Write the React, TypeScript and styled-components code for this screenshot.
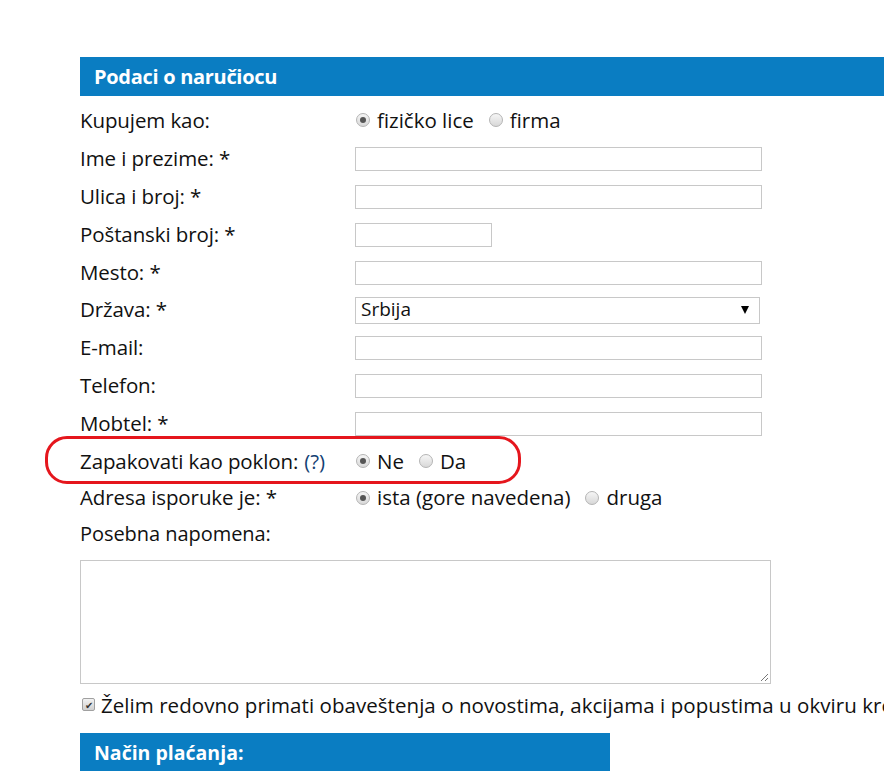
import styled, { createGlobalStyle } from 'styled-components';

const GlobalStyle = createGlobalStyle`
  html, body {
    margin: 0;
    padding: 0;
    background: #fff;
    overflow: hidden;
  }
  body {
    font-family: "Open Sans", "Noto Sans", sans-serif;
    color: #111;
  }
`;

const Page = styled.div`
  width: 884px;
  height: 771px;
  overflow: hidden;
  padding: 57px 0 0 80px;
  box-sizing: border-box;
`;

const Form = styled.div`
  width: 840px;
`;

const SectionBar = styled.div<{ $width?: number }>`
  width: ${(p) => (p.$width ? `${p.$width}px` : '100%')};
  height: 39px;
  background: #0a7dc2;
  color: #fff;
  font-weight: 700;
  font-size: ${(p) => (p.$width ? '19.5px' : '20px')};
  display: flex;
  align-items: center;
  padding-left: 14px;
  box-sizing: border-box;
  letter-spacing: ${(p) => (p.$width ? '0px' : '-0.3px')};
`;

const Rows = styled.div`
  margin-top: 6px;
  display: grid;
  grid-template-columns: 275px 1fr;
  grid-template-rows: repeat(10, 37.9px) 35px;
`;

const Label = styled.div`
  position: relative;
  display: flex;
  align-items: center;
  font-size: 20.5px;
  white-space: nowrap;
  letter-spacing: -0.1px;
  padding-bottom: 2px;
`;

const Help = styled.span`
  color: #143f74;
  margin-left: 6px;
`;

const Control = styled.div`
  display: flex;
  align-items: center;
  font-size: 20.5px;
`;

const TextInput = styled.div<{ $w: number }>`
  width: ${(p) => p.$w}px;
  height: 24px;
  border: 1px solid #c8c8c8;
  box-sizing: border-box;
  background: #fff;
`;

const Select = styled.div`
  width: 405px;
  height: 27px;
  border: 1px solid #c8c8c8;
  box-sizing: border-box;
  display: flex;
  align-items: center;
  justify-content: space-between;
  padding: 0 10px 2px 5px;
  font-size: 19px;
`;

const Arrow = styled.span`
  width: 0;
  height: 0;
  margin-top: 2px;
  border-left: 4px solid transparent;
  border-right: 4px solid transparent;
  border-top: 8px solid #000;
`;

const RadioGroup = styled.div`
  display: flex;
  align-items: center;
  gap: 15px;
  margin-left: 1px;
  padding-bottom: 2px;
`;

const RadioItem = styled.label`
  display: flex;
  align-items: center;
  gap: 7px;
  white-space: nowrap;
`;

const RadioDot = styled.span<{ $on?: boolean }>`
  width: 14px;
  height: 14px;
  border-radius: 50%;
  border: 1px solid #b4b4b4;
  box-sizing: border-box;
  background: linear-gradient(#f6f6f6, #d8d8d8);
  display: flex;
  align-items: center;
  justify-content: center;
  margin-top: 1px;
  &::after {
    content: '';
    width: 6px;
    height: 6px;
    border-radius: 50%;
    background: ${(p) => (p.$on ? '#555' : 'transparent')};
  }
`;

const Highlight = styled.div`
  position: absolute;
  left: -35px;
  top: -7px;
  width: 476px;
  height: 48px;
  border: 3.5px solid #e5161d;
  border-radius: 22px;
  box-sizing: border-box;
  pointer-events: none;
`;

const NoteLabel = styled.div`
  font-size: 20px;
  letter-spacing: -0.05px;
  height: 44px;
  display: flex;
  align-items: center;
  padding-bottom: 8px;
  box-sizing: border-box;
`;

const NoteArea = styled.div`
  position: relative;
  width: 691px;
  height: 124px;
  border: 1px solid #c8c8c8;
  box-sizing: border-box;
`;

const Grip = styled.svg`
  position: absolute;
  right: 1px;
  bottom: 1px;
`;

const CheckRow = styled.label`
  display: flex;
  align-items: center;
  gap: 6px;
  margin-top: 11px;
  height: 20px;
  font-size: 20.5px;
  letter-spacing: 0.05px;
  white-space: nowrap;
`;

const CheckBox = styled.span`
  flex: none;
  width: 13px;
  height: 13px;
  margin-left: 2px;
  border: 1px solid #a0a0a0;
  border-radius: 2px;
  box-sizing: border-box;
  background: linear-gradient(#f2f2f2, #d0d0d0);
  display: flex;
  align-items: center;
  justify-content: center;
  font-size: 10px;
  letter-spacing: 0;
  line-height: 1;
  color: #333;
`;

const Footer = styled.div`
  margin-top: 18px;
`;

type Field = { label: string; req?: boolean; width?: number };

const fields: Field[] = [
  { label: 'Ime i prezime:', req: true, width: 407 },
  { label: 'Ulica i broj:', req: true, width: 407 },
  { label: 'Poštanski broj:', req: true, width: 137 },
  { label: 'Mesto:', req: true, width: 407 },
];

const contactFields: Field[] = [
  { label: 'E-mail:', width: 407 },
  { label: 'Telefon:', width: 407 },
  { label: 'Mobtel:', req: true, width: 407 },
];

const Radio = ({ on, text }: { on?: boolean; text: string }) => (
  <RadioItem>
    <RadioDot $on={on} />
    {text}
  </RadioItem>
);

const FieldRow = ({ f }: { f: Field }) => (
  <>
    <Label>
      {f.label}
      {f.req && ' *'}
    </Label>
    <Control>
      <TextInput $w={f.width || 407} />
    </Control>
  </>
);

export default function App() {
  return (
    <Page>
      <GlobalStyle />
      <Form>
        <SectionBar>Podaci o naručiocu</SectionBar>
        <Rows>
          <Label>Kupujem kao:</Label>
          <Control>
            <RadioGroup>
              <Radio on text="fizičko lice" />
              <Radio text="firma" />
            </RadioGroup>
          </Control>

          {fields.map((f) => (
            <FieldRow key={f.label} f={f} />
          ))}

          <Label>Država: *</Label>
          <Control>
            <Select>
              Srbija
              <Arrow />
            </Select>
          </Control>

          {contactFields.map((f) => (
            <FieldRow key={f.label} f={f} />
          ))}

          <Label>
            <Highlight />
            Zapakovati kao poklon:<Help>(?)</Help>
          </Label>
          <Control>
            <RadioGroup>
              <Radio on text="Ne" />
              <Radio text="Da" />
            </RadioGroup>
          </Control>

          <Label>Adresa isporuke je: *</Label>
          <Control>
            <RadioGroup>
              <Radio on text="ista (gore navedena)" />
              <Radio text="druga" />
            </RadioGroup>
          </Control>
        </Rows>

        <NoteLabel>Posebna napomena:</NoteLabel>
        <NoteArea>
          <Grip width="10" height="10" viewBox="0 0 10 10">
            <path d="M9 2 L2 9 M9 6 L6 9" stroke="#777" strokeWidth="1" fill="none" />
          </Grip>
        </NoteArea>

        <CheckRow>
          <CheckBox>✔</CheckBox>
          Želim redovno primati obaveštenja o novostima, akcijama i popustima u okviru kreativnog centra
        </CheckRow>

        <Footer>
          <SectionBar $width={530}>Način plaćanja:</SectionBar>
        </Footer>
      </Form>
    </Page>
  );
}
